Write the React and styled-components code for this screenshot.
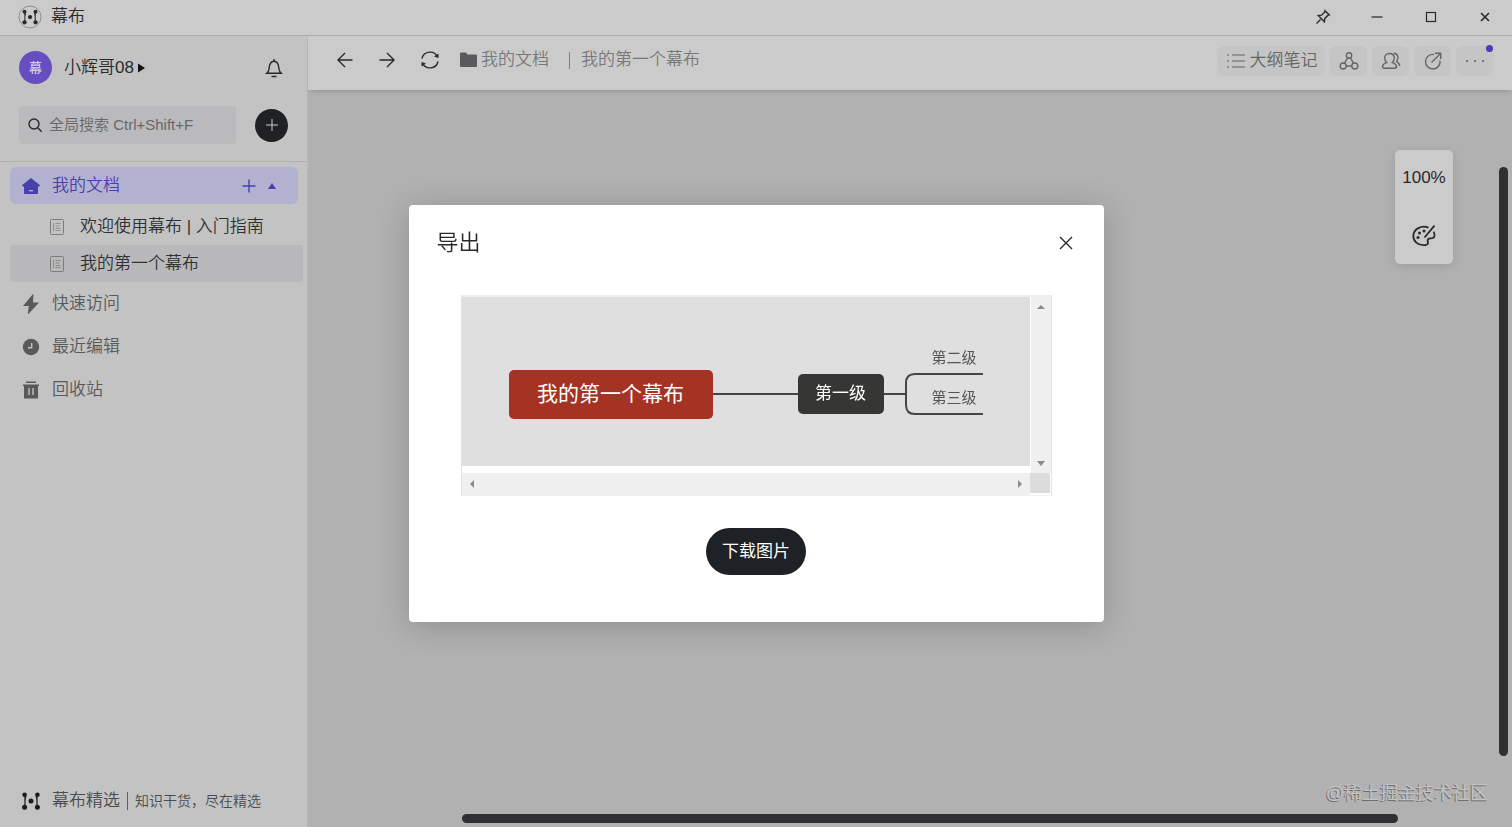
import React from 'react'
import styled, { createGlobalStyle, css } from 'styled-components'

const GlobalStyle = createGlobalStyle`
  * {
    box-sizing: border-box;
  }
  body {
    margin: 0;
    overflow: hidden;
    font-family: "Liberation Sans", "Noto Sans CJK SC", sans-serif;
    font-weight: 350;
    font-size: 17px;
    line-height: 24px;
    color: #29292a;
  }
  button, input {
    font: inherit;
    color: inherit;
    border: 0;
    padding: 0;
    background: none;
  }
  a {
    color: inherit;
    text-decoration: none;
  }
  svg {
    display: block;
    flex: none;
  }
  h1, h2, p, ul {
    margin: 0;
    padding: 0;
    font-weight: inherit;
  }
`

const Icon = ({ size = 20, width, height, box, stroke = 1.4, children }) => (
  <svg
    width={width || size}
    height={height || size}
    viewBox={box || `0 0 ${width || size} ${height || size}`}
    fill="none"
    stroke="currentColor"
    strokeWidth={stroke}
    aria-hidden="true"
  >
    {children}
  </svg>
)

const LogoMark = () => (
  <g fill="currentColor" stroke="currentColor" strokeWidth="1.2">
    <path d="M3 3v12M15 3v12" />
    <circle cx="2.6" cy="2.8" r="2.3" stroke="none" />
    <circle cx="2.6" cy="15.2" r="2.5" stroke="none" />
    <circle cx="15.4" cy="2.8" r="2.3" stroke="none" />
    <circle cx="15.4" cy="15.2" r="2.5" stroke="none" />
    <path d="M3 4.5l1.500 0-1.500 4zM15 4.5l-1.500 0 1.500 4z" stroke="none" />
    <circle cx="9" cy="9" r="2.5" stroke="none" />
  </g>
)

const Logo = () => (
  <Icon size={24}>
    <circle cx="12" cy="12" r="11" stroke="#8e8e8e" strokeWidth="1" />
    <g transform="translate(4.300 4.300) scale(.86)">
      <LogoMark />
    </g>
  </Icon>
)

const DocIcon = () => (
  <Icon size={16} stroke={1}>
    <rect x="1.500" y=".5" width="13" height="15" rx="1" />
    <path d="M4.500 4v8M6.500 4.500h5M6.500 7h4M6.500 9.500h5M6.500 11.500h5" opacity=".7" />
  </Icon>
)

const Arrow = ({ d }) => (
  <Icon size={8} stroke={0}>
    <path d={d} fill="#8b8b8b" />
  </Icon>
)

const navItems = [
  {
    label: '快速访问',
    icon: (
      <Icon size={20} stroke={0}>
        <path d="M12.500-.5L2 12h5.800L6.700 20.800 18 8.400h-6z" fill="currentColor" />
      </Icon>
    ),
  },
  {
    label: '最近编辑',
    icon: (
      <Icon size={20}>
        <circle cx="10" cy="10" r="8.200" fill="currentColor" stroke="none" />
        <path d="M10.700 6v4.700H7" stroke="#c3c3c3" />
      </Icon>
    ),
  },
  {
    label: '回收站',
    icon: (
      <Icon size={20}>
        <path d="M5 1.500h10V3H5zM2 4.500h16V6h-1v12.500H3V6H2z" fill="currentColor" stroke="none" />
        <path d="M8 8v7M12 8v7" stroke="#c3c3c3" />
      </Icon>
    ),
  },
]

function TitleBar() {
  return (
    <Header>
      <Logo />
      <AppName>幕布</AppName>
      <WindowButtons>
        <WindowButton aria-label="置顶">
          <Icon size={16}>
            <path d="M1.500 14.500l4-4M10 1.700l4.300 4.300-1.500.4-3 3-.4 3.300L3.300 6.600l3.300-.4 3-3z" />
          </Icon>
        </WindowButton>
        <WindowButton aria-label="最小化">
          <Icon size={12} stroke={1.200}>
            <path d="M.5 6h11" />
          </Icon>
        </WindowButton>
        <WindowButton aria-label="最大化">
          <Icon size={12} stroke={1.200}>
            <rect x="1.500" y="1.500" width="9" height="9" />
          </Icon>
        </WindowButton>
        <WindowButton aria-label="关闭窗口">
          <Icon size={12} stroke={1.600}>
            <path d="M2 2l8 8M10 2l-8 8" />
          </Icon>
        </WindowButton>
      </WindowButtons>
    </Header>
  )
}

function SideBar() {
  return (
    <Side>
      <UserRow>
        <Avatar>幕</Avatar>
        <UserButton>
          小辉哥08
          <Icon width={7} height={10} stroke={0}>
            <path d="M0 .5l7 4.500-7 4.500z" fill="#111" />
          </Icon>
        </UserButton>
        <BellButton aria-label="通知">
          <Icon size={20}>
            <path d="M10 1v2M2.800 15.300h14.400c-1.500-1.300-2-2.500-2.200-4.300-.3-4-1.500-7.700-5-7.700S5.300 7 5 11c-.2 1.800-.7 3-2.200 4.300zM7.500 18.500h5" />
          </Icon>
        </BellButton>
      </UserRow>
      <SearchRow>
        <SearchLabel>
          <Icon size={16}>
            <circle cx="7" cy="7" r="5" />
            <path d="M10.700 10.700l4 4" />
          </Icon>
          <SearchInput aria-label="全局搜索" placeholder="全局搜索 Ctrl+Shift+F" />
        </SearchLabel>
        <AddButton aria-label="新建">
          <Icon size={12} stroke={1}>
            <path d="M6 0v12M0 6h12" />
          </Icon>
        </AddButton>
      </SearchRow>
      <Nav>
        <HomeItem>
          <NavLink href="#docs">
            <Icon size={20} stroke={0}>
              <path d="M10 2l9 7.200-.7 1.300H17v6.500q0 1-1 1H4q-1 0-1-1v-6.500H1.700L1 9.200z" fill="currentColor" />
              <path d="M8 14h4v1.400H8z" fill="#b3b1d0" />
            </Icon>
            我的文档
          </NavLink>
          <HomeButton aria-label="新建文档">
            <Icon size={14}>
              <path d="M7 .5v13M.5 7h13" />
            </Icon>
          </HomeButton>
          <HomeButton aria-label="收起">
            <Icon width={8} height={8} stroke={0}>
              <path d="M4 1l4 6H0z" fill="currentColor" />
            </Icon>
          </HomeButton>
        </HomeItem>
        <DocLink href="#guide">
          <DocIcon />
          <span>欢迎使用幕布 | 入门指南</span>
        </DocLink>
        <DocLink href="#first" $active>
          <DocIcon />
          <span>我的第一个幕布</span>
        </DocLink>
        {navItems.map((item) => (
          <NavItem key={item.label} href={`#${item.label}`}>
            {item.icon}
            {item.label}
          </NavItem>
        ))}
      </Nav>
      <Featured href="#featured">
        <FeaturedMark>
          <Icon size={18}>
            <LogoMark />
          </Icon>
        </FeaturedMark>
        <span>幕布精选</span>
        <Bar />
        <Slogan>知识干货，尽在精选</Slogan>
      </Featured>
    </Side>
  )
}

function ToolBar() {
  return (
    <Tools>
      <HistoryButtons>
        <PlainButton aria-label="后退">
          <Icon size={18}>
            <path d="M16.500 9H2M9 2L2 9l7 7" />
          </Icon>
        </PlainButton>
        <PlainButton aria-label="前进">
          <Icon size={18}>
            <path d="M1.500 9H16M9 2l7 7-7 7" />
          </Icon>
        </PlainButton>
        <PlainButton aria-label="刷新">
          <Icon size={20}>
            <path d="M2 8.500a8.200 8.200 0 0 1 15.500-1.500M18 11.500a8.200 8.200 0 0 1-15.500 1.500" />
            <path d="M18.500 3.500V8l-4.500-1.500zM1.500 16.500V12L6 13.500z" fill="currentColor" stroke="none" />
          </Icon>
        </PlainButton>
      </HistoryButtons>
      <Crumbs>
        <Icon size={18} stroke={0}>
          <path d="M1 2.500q0-1 1-1h5l1.500 2H17q1 0 1 1V15q0 1-1 1H2q-1 0-1-1z" fill="#585b5b" />
        </Icon>
        <a href="#docs">我的文档</a>
        <CrumbBar />
        <a href="#first">我的第一个幕布</a>
      </Crumbs>
      <Actions>
        <Action $wide>
          <Icon size={20} stroke={1.200}>
            <path d="M6 4h13M6 10h13M6 16h13M1 4h2M1 10h2M1 16h2" />
          </Icon>
          大纲笔记
        </Action>
        <Action aria-label="思维导图">
          <Icon size={20}>
            <circle cx="10" cy="4.500" r="2.700" />
            <circle cx="4.200" cy="15" r="3" />
            <circle cx="15.800" cy="15" r="3" />
            <path d="M8.500 7L5.500 12.200M11.500 7l3 5.200M7.200 15h5.600" />
          </Icon>
        </Action>
        <Action aria-label="协作">
          <Icon size={20}>
            <path d="M8.500 2.500c3 0 4.800 2 4.800 4.500 0 2-.8 3.500-2 4.500 2 .8 4.200 1.500 4.200 4 0 1-.7 1.800-1.800 1.800H3.300c-1.100 0-1.800-.8-1.800-1.800 0-2.500 2.200-3.200 4.200-4-1.200-1-2-2.500-2-4.500 0-2.500 1.800-4.500 4.800-4.500zM13 2.200c4.300.3 5 5.300 2.500 8.500 2 .9 3 1.900 3.200 4.300" />
          </Icon>
        </Action>
        <Action aria-label="分享">
          <Icon size={20}>
            <path d="M11 3.500A7.300 7.300 0 1 0 17 9.500M8.500 11.500L17.500 2.500M12 2.300h5.700V8" />
          </Icon>
        </Action>
        <Action aria-label="更多">
          <Icon size={20} stroke={0}>
            <g fill="currentColor">
              <circle cx="2" cy="10" r="1.100" />
              <circle cx="10" cy="10" r="1.100" />
              <circle cx="18" cy="10" r="1.100" />
            </g>
          </Icon>
          <Dot />
        </Action>
      </Actions>
    </Tools>
  )
}

function MindMap() {
  return (
    <MapCanvas>
      <Links width="568" height="169" fill="none" stroke="#444547" strokeWidth="2" aria-hidden="true">
        <path d="M250 97h87M421 97h22M521 77h-68q-9 0-9 9v22q0 9 9 9h68" />
      </Links>
      <RootNode>我的第一个幕布</RootNode>
      <TopicNode>第一级</TopicNode>
      <Leaf $top={49}>第二级</Leaf>
      <Leaf $top={89}>第三级</Leaf>
    </MapCanvas>
  )
}

function ExportDialog() {
  return (
    <Overlay>
      <Dialog role="dialog" aria-labelledby="export-title">
        <DialogHeader>
          <DialogTitle id="export-title">导出</DialogTitle>
          <PlainButton aria-label="关闭">
            <Icon size={14}>
              <path d="M1 1l12 12M13 1L1 13" />
            </Icon>
          </PlainButton>
        </DialogHeader>
        <Preview>
          <MindMap />
          <VTrack>
            <Arrow d="M4 2l4 4H0z" />
            <Arrow d="M0 2h8L4 7z" />
          </VTrack>
          <HTrack>
            <Arrow d="M6 0v8L2 4z" />
            <Arrow d="M2 0v8l4-4z" />
          </HTrack>
          <Corner />
        </Preview>
        <Download>下载图片</Download>
      </Dialog>
    </Overlay>
  )
}

export default function App() {
  return (
    <Page>
      <GlobalStyle />
      <TitleBar />
      <Body>
        <SideBar />
        <Main>
          <ToolBar />
          <Canvas>
            <ZoomPanel>
              <PlainButton>100%</PlainButton>
              <PlainButton aria-label="主题">
                <Icon size={24} stroke={1.800}>
                  <path d="M16.500 3.700C9.500.8 1.500 5 1.300 11.800 1.200 17.500 6 21.200 11.500 21.200c3 0 4.500-.6 4.500-2.200 0-1.500-1-2.500 0-3.700 1.300-1.500 3.200-.4 5-1.300 2-1 1.800-4 .6-6.300M22.500 1.700L12.500 13.500" />
                  <g fill="currentColor" stroke="none">
                    <circle cx="12" cy="7" r="1.500" />
                    <circle cx="7.500" cy="9" r="1.500" />
                    <circle cx="6" cy="13.500" r="1.500" />
                  </g>
                </Icon>
              </PlainButton>
            </ZoomPanel>
            <VScroll />
            <HScroll />
            <Watermark>@稀土掘金技术社区</Watermark>
          </Canvas>
        </Main>
      </Body>
      <ExportDialog />
    </Page>
  )
}

const Page = styled.div`
  display: flex;
  flex-direction: column;
  height: 100vh;
  background: #cbcbcb;
`

const Header = styled.header`
  display: flex;
  align-items: center;
  height: 36px;
  padding: 0 12px 1px 18px;
  border-bottom: 1px solid #adadad;
`

const AppName = styled.h1`
  margin-left: 9px;
  font-size: 17px;
`

const WindowButtons = styled.div`
  display: flex;
  gap: 24px;
  margin-left: auto;
`

const WindowButton = styled.button`
  display: grid;
  place-items: center;
  width: 30px;
  height: 30px;
`

const Body = styled.div`
  display: flex;
  flex: 1;
  min-height: 0;
`

const Side = styled.aside`
  display: flex;
  flex: none;
  flex-direction: column;
  width: 308px;
  background: #c3c3c3;
  border-right: 1px solid #b9b9b9;
`

const UserRow = styled.div`
  display: flex;
  align-items: center;
  padding: 15px 23px 0 19px;
`

const Avatar = styled.span`
  display: grid;
  place-items: center;
  width: 33px;
  height: 33px;
  border-radius: 50%;
  background: #664dc0;
  color: #d2ccec;
  font-size: 13px;
  font-weight: 500;
`

const UserButton = styled.button`
  display: flex;
  align-items: center;
  gap: 4px;
  margin-left: 12px;
`

const BellButton = styled.button`
  margin-left: auto;
`

const SearchRow = styled.div`
  display: flex;
  align-items: center;
  gap: 19px;
  padding: 22px 19px 17px;
  border-bottom: 1px solid #b0b0b0;
`

const SearchLabel = styled.label`
  display: flex;
  flex: 1;
  align-items: center;
  gap: 6px;
  min-width: 0;
  height: 38px;
  padding: 0 8px;
  border-radius: 4px;
  background: #bababc;
`

const SearchInput = styled.input`
  flex: 1;
  min-width: 0;
  font-size: 15px;

  &::placeholder {
    color: #66676a;
    opacity: 1;
  }
`

const AddButton = styled.button`
  display: grid;
  flex: none;
  place-items: center;
  width: 33px;
  height: 33px;
  border-radius: 50%;
  background: #202122;
  color: #cbcbcb;
`

const Nav = styled.nav`
  display: flex;
  flex-direction: column;
  padding: 5px 4px 0 10px;
  color: #58595b;
`

const HomeItem = styled.div`
  display: flex;
  align-items: center;
  gap: 12px;
  height: 37px;
  margin: 0 5px 4px 0;
  padding: 0 22px 0 11px;
  border-radius: 6px;
  background: #b3b1d0;
  color: #4a40aa;
`

const NavLink = styled.a`
  display: flex;
  flex: 1;
  align-items: center;
  gap: 11px;
`

const HomeButton = styled.button`
  display: grid;
  place-items: center;
`

const DocLink = styled.a`
  display: flex;
  align-items: center;
  gap: 15px;
  height: 37px;
  padding-left: 39px;
  border-radius: 3px;
  color: #303133;
  ${(p) => p.$active && css`
    background: #b9b9bb;
  `}

  svg {
    color: #7c7c7c;
  }
`

const NavItem = styled.a`
  display: flex;
  align-items: center;
  gap: 11px;
  height: 42px;
  margin-top: 1px;
  padding-left: 11px;
`

const Featured = styled.a`
  display: flex;
  align-items: center;
  gap: 7px;
  margin-top: auto;
  padding: 0 22px 14px;
  color: #4b4c4e;
`

const FeaturedMark = styled.span`
  margin-right: 5px;
  color: #1b1b1b;
`

const Bar = styled.i`
  width: 1px;
  height: 18px;
  background: #5c5c5c;
`

const Slogan = styled.span`
  font-size: 14px;
`

const Main = styled.main`
  display: flex;
  flex: 1;
  flex-direction: column;
  min-width: 0;
`

const Tools = styled.div`
  display: flex;
  align-items: center;
  height: 54px;
  padding: 0 19px 6px 28px;
  box-shadow: 0 4px 5px -3px rgba(0, 0, 0, 0.2);
  z-index: 1;
`

const PlainButton = styled.button`
  display: grid;
  place-items: center;
`

const HistoryButtons = styled.div`
  display: flex;
  align-items: center;
  gap: 24px;
`

const Crumbs = styled.div`
  display: flex;
  align-items: center;
  gap: 4px;
  margin-left: 19px;
  color: #77787a;
`

const CrumbBar = styled.i`
  width: 1px;
  height: 17px;
  margin: 0 7px 0 16px;
  background: #808080;
`

const Actions = styled.div`
  display: flex;
  gap: 5px;
  margin-left: auto;
  padding-top: 2px;
  color: #646566;
`

const Action = styled.button`
  position: relative;
  display: flex;
  align-items: center;
  justify-content: center;
  gap: 4px;
  width: ${(p) => (p.$wide ? '107px' : '37px')};
  height: 30px;
  border-radius: 6px;
  background: #c5c5c5;
`

const Dot = styled.span`
  position: absolute;
  top: -1px;
  right: 0;
  width: 7px;
  height: 7px;
  border-radius: 50%;
  background: #4c3bb0;
`

const Canvas = styled.section`
  position: relative;
  flex: 1;
  background: #b1b1b1;
`

const ZoomPanel = styled.div`
  position: absolute;
  top: 60px;
  right: 59px;
  display: flex;
  flex-direction: column;
  align-items: center;
  justify-content: space-between;
  width: 58px;
  height: 114px;
  padding: 16px 0;
  border-radius: 5px;
  background: #cbcbcb;
  box-shadow: 0 2px 10px rgba(0, 0, 0, 0.12);
`

const thumb = css`
  position: absolute;
  border-radius: 5px;
  background: #2e3133;
`

const VScroll = styled.div`
  ${thumb}
  top: 77px;
  right: 4px;
  bottom: 71px;
  width: 9px;
`

const HScroll = styled.div`
  ${thumb}
  right: 114px;
  bottom: 4px;
  left: 154px;
  height: 9px;
`

const Watermark = styled.p`
  position: absolute;
  right: 24px;
  bottom: 22px;
  font-size: 18px;
  color: #c4c4c4;
  text-shadow: -1px 1px 0 #6f6f6f;
`

const Overlay = styled.div`
  position: fixed;
  inset: 0;
  z-index: 2;
  display: flex;
  align-items: center;
  justify-content: center;
`

const Dialog = styled.div`
  display: flex;
  flex-direction: column;
  align-items: center;
  width: 695px;
  padding-bottom: 47px;
  border-radius: 4px;
  background: #fff;
  box-shadow: 0 4px 32px rgba(0, 0, 0, 0.2);
`

const DialogHeader = styled.div`
  display: flex;
  align-items: center;
  justify-content: space-between;
  width: 100%;
  padding: 23px 31px 37px 28px;
`

const DialogTitle = styled.h2`
  font-size: 22px;
  line-height: 30px;
`

const Preview = styled.div`
  display: grid;
  grid-template-columns: 1fr 21px;
  grid-template-rows: 176px 22px;
  width: 591px;
  border: 1px solid #e4e4e4;
  border-top: 2px solid #eee;
  border-bottom-color: #f0f0f0;
`

const MapCanvas = styled.div`
  position: relative;
  height: 169px;
  background: #dfdfdf;
  font-weight: 400;
  white-space: nowrap;
`

const Links = styled.svg`
  position: absolute;
  inset: 0;
`

const node = css`
  position: absolute;
  display: grid;
  place-items: center;
  border-radius: 5px;
  color: #fff;
`

const RootNode = styled.div`
  ${node}
  top: 73px;
  left: 47px;
  width: 204px;
  height: 49px;
  padding-bottom: 2px;
  background: #a43324;
  font-size: 21px;
`

const TopicNode = styled.div`
  ${node}
  top: 77px;
  left: 336px;
  width: 86px;
  height: 40px;
  background: #363632;
`

const Leaf = styled.div`
  position: absolute;
  top: ${(p) => p.$top}px;
  left: 470px;
  font-size: 15px;
  color: #555;
`

const VTrack = styled.div`
  display: flex;
  flex-direction: column;
  align-items: center;
  justify-content: space-between;
  padding: 6px 0;
  border-left: 1px solid #fff;
  background: #f0f0f0;
`

const HTrack = styled.div`
  display: flex;
  align-items: center;
  justify-content: space-between;
  padding: 0 6px;
  background: #f0f0f0;
`

const Corner = styled.div`
  margin: 0 1px 2px 0;
  background: #dcdcdc;
`

const Download = styled.button`
  margin-top: 32px;
  padding: 12px 16px 11px;
  border-radius: 24px;
  background: #1e2227;
  color: #fff;
  font-weight: 400;
`
